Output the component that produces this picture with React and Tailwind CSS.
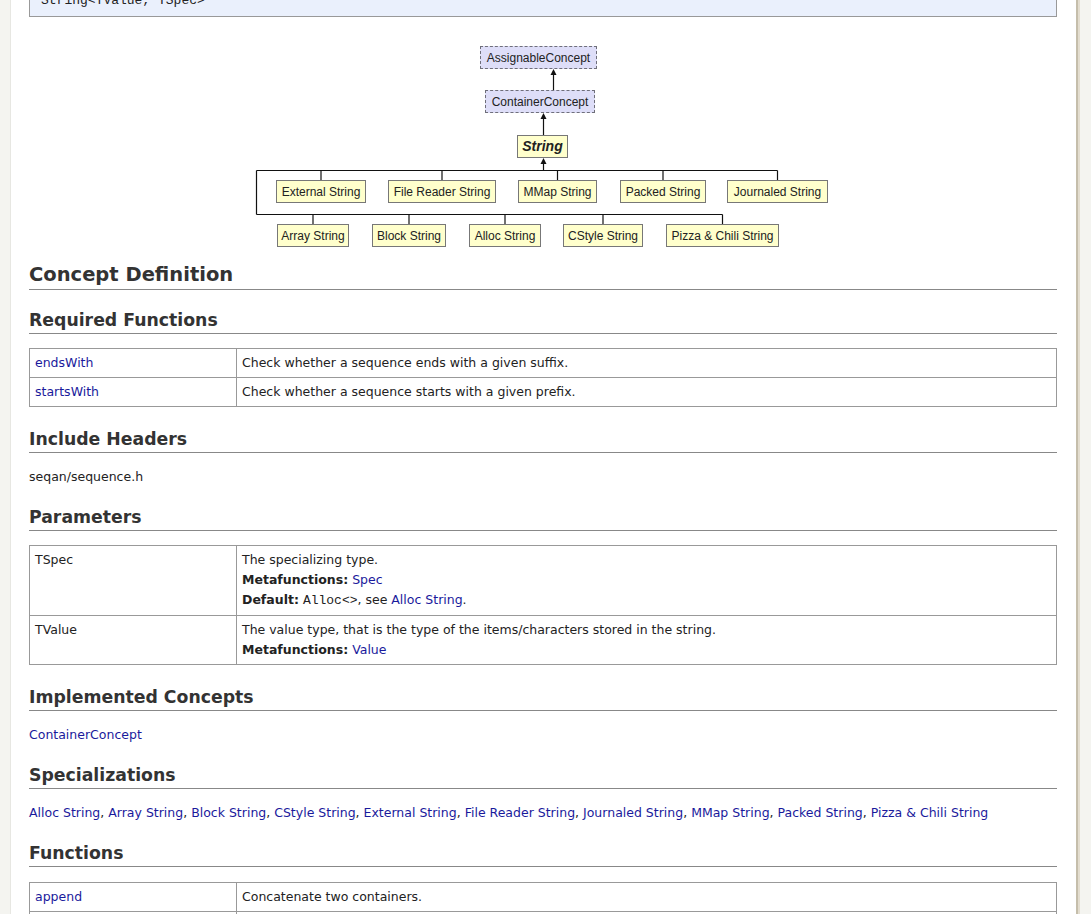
import React from "react"

const body = { fontFamily: '"DejaVu Sans", Verdana, sans-serif' }

// nodes of the class diagram (coords relative to the diagram box)
const concepts = [
  { label: "AssignableConcept", left: 451, top: 28, w: 117 },
  { label: "ContainerConcept", left: 456, top: 72, w: 110 },
]
const row1 = [
  { label: "External String", left: 247, w: 90 },
  { label: "File Reader String", left: 359, w: 108 },
  { label: "MMap String", left: 489, w: 79 },
  { label: "Packed String", left: 591, w: 86 },
  { label: "Journaled String", left: 698, w: 101 },
]
const row2 = [
  { label: "Array String", left: 248, w: 72 },
  { label: "Block String", left: 343, w: 74 },
  { label: "Alloc String", left: 440, w: 72 },
  { label: "CStyle String", left: 534, w: 80 },
  { label: "Pizza & Chili String", left: 637, w: 113 },
]

const specs = [
  "Alloc String", "Array String", "Block String", "CStyle String", "External String",
  "File Reader String", "Journaled String", "MMap String", "Packed String", "Pizza & Chili String",
]

const Arrow = ({ x, y }) => <polygon points={`${x},${y} ${x - 3},${y + 6} ${x + 3},${y + 6}`} fill="#111" />

const Diagram = () => {
  const c1 = row1.map((n) => n.left + n.w / 2)
  const c2 = row2.map((n) => n.left + n.w / 2)
  return (
    <div className="relative h-[244px] pt-[1px]" style={{ fontFamily: '"Liberation Sans", Arial, sans-serif' }}>
      <div className="relative h-[243px]">
        <svg className="absolute inset-0" width="1028" height="243">
          <g stroke="#111" strokeWidth="1.2" fill="none">
            <line x1="524.5" y1="53" x2="524.5" y2="72" />
            <line x1="514.5" y1="97" x2="514.5" y2="117" />
            <line x1="514.5" y1="142" x2="514.5" y2="152.5" />
            <line x1="227.5" y1="152.5" x2={c1[4]} y2="152.5" />
            {c1.map((x, i) => <line key={i} x1={x} y1="152.5" x2={x} y2="162" />)}
            <line x1="227.5" y1="152.5" x2="227.5" y2="196.5" />
            <line x1="227.5" y1="196.5" x2={c2[4]} y2="196.5" />
            {c2.map((x, i) => <line key={i} x1={x} y1="196.5" x2={x} y2="206" />)}
          </g>
          <Arrow x={524.5} y={51} />
          <Arrow x={514.5} y={95} />
          <Arrow x={514.5} y={140} />
        </svg>
        {concepts.map((n) => (
          <div
            key={n.label}
            className="absolute h-[23px] flex items-center justify-center border border-dashed border-[#6f6f7a] bg-[#dedef8] text-[12px] text-[#222]"
            style={{ left: n.left, top: n.top, width: n.w }}
          >
            {n.label}
          </div>
        ))}
        <div className="absolute left-[488px] top-[117px] w-[51px] h-[23px] flex items-center justify-center border border-[#777] bg-[#ffffcc] text-[14px] font-bold italic text-[#222]">
          String
        </div>
        {row1.map((n) => (
          <div
            key={n.label}
            className="absolute top-[162px] h-[23px] flex items-center justify-center border border-[#777] bg-[#ffffcc] text-[12px] text-[#222]"
            style={{ left: n.left, width: n.w }}
          >
            {n.label}
          </div>
        ))}
        {row2.map((n) => (
          <div
            key={n.label}
            className="absolute top-[206px] h-[23px] flex items-center justify-center border border-[#777] bg-[#ffffcc] text-[12px] text-[#222]"
            style={{ left: n.left, width: n.w }}
          >
            {n.label}
          </div>
        ))}
      </div>
    </div>
  )
}

const H2 = ({ children, className = "" }) => (
  <h2 className={`text-[17.3px] font-bold leading-[24px] text-[#333] border-b border-[#888] pb-[1px] ${className}`}>{children}</h2>
)

const A = ({ children }) => <a href="#" className="text-[#1a1a9c]">{children}</a>

const Table = ({ rows }) => (
  <table className="w-full border-collapse text-[12.5px] leading-[20px] text-[#222]">
    <tbody>
      {rows.map((r, i) => (
        <tr key={i}>
          <td className="w-[207px] border border-[#999] px-[5px] py-[4px] align-top">{r[0]}</td>
          <td className="border border-[#999] px-[5px] py-[4px] align-top">{r[1]}</td>
        </tr>
      ))}
    </tbody>
  </table>
)

const mono = { fontFamily: '"Liberation Mono", "Courier New", monospace' }

export default function App() {
  return (
    <div className="flex h-[914px] overflow-hidden bg-[#f4f4f0]" style={body}>
      <div className="w-[11px] shrink-0 border-r border-[#e7e7e2]" />
      <main className="w-[1065px] shrink-0 bg-white pl-[18px] pr-[19px]">
        {/* code box, top cut off */}
        <div className="mt-[-15px] border border-[#999] bg-[#eaf0fc] px-[11px] py-[6px] text-[13px] leading-[18px] text-[#222]" style={mono}>
          String&lt;TValue, TSpec&gt;
        </div>

        <Diagram />

        <h1 className="text-[19.5px] font-bold leading-[28px] text-[#333] border-b border-[#888]">Concept Definition</h1>

        <H2 className="mt-[18px]">Required Functions</H2>
        <div className="mt-[14px]">
          <Table
            rows={[
              [<A>endsWith</A>, "Check whether a sequence ends with a given suffix."],
              [<A>startsWith</A>, "Check whether a sequence starts with a given prefix."],
            ]}
          />
        </div>

        <H2 className="mt-[20px]">Include Headers</H2>
        <p className="mt-[14px] text-[12.5px] leading-[20px] text-[#222]">seqan/sequence.h</p>

        <H2 className="mt-[18px]">Parameters</H2>
        <div className="mt-[14px]">
          <Table
            rows={[
              [
                "TSpec",
                <>
                  <div>The specializing type.</div>
                  <div><b>Metafunctions:</b> <A>Spec</A></div>
                  <div>
                    <b>Default:</b> <span className="text-[13px]" style={mono}>Alloc&lt;&gt;</span>, see <A>Alloc String</A>.
                  </div>
                </>,
              ],
              [
                "TValue",
                <>
                  <div>The value type, that is the type of the items/characters stored in the string.</div>
                  <div><b>Metafunctions:</b> <A>Value</A></div>
                </>,
              ],
            ]}
          />
        </div>

        <H2 className="mt-[20px]">Implemented Concepts</H2>
        <p className="mt-[14px] text-[12.5px] leading-[20px]"><A>ContainerConcept</A></p>

        <H2 className="mt-[18px]">Specializations</H2>
        <p className="mt-[14px] text-[12.5px] leading-[20px] text-[#222]">
          {specs.map((s, i) => (
            <React.Fragment key={s}>
              <A>{s}</A>
              {i < specs.length - 1 ? ", " : ""}
            </React.Fragment>
          ))}
        </p>

        <H2 className="mt-[18px]">Functions</H2>
        <div className="mt-[15px]">
          <Table
            rows={[
              [<A>append</A>, "Concatenate two containers."],
              [<A>appendValue</A>, "Appends a value to a container."],
              [<A>assign</A>, "Assigns one object to another object."],
            ]}
          />
        </div>
      </main>
      <div className="flex-1 border-l-2 border-[#c5beab]">
        <div className="h-full border-l-2 border-[#e3ddcf]" />
      </div>
    </div>
  )
}
